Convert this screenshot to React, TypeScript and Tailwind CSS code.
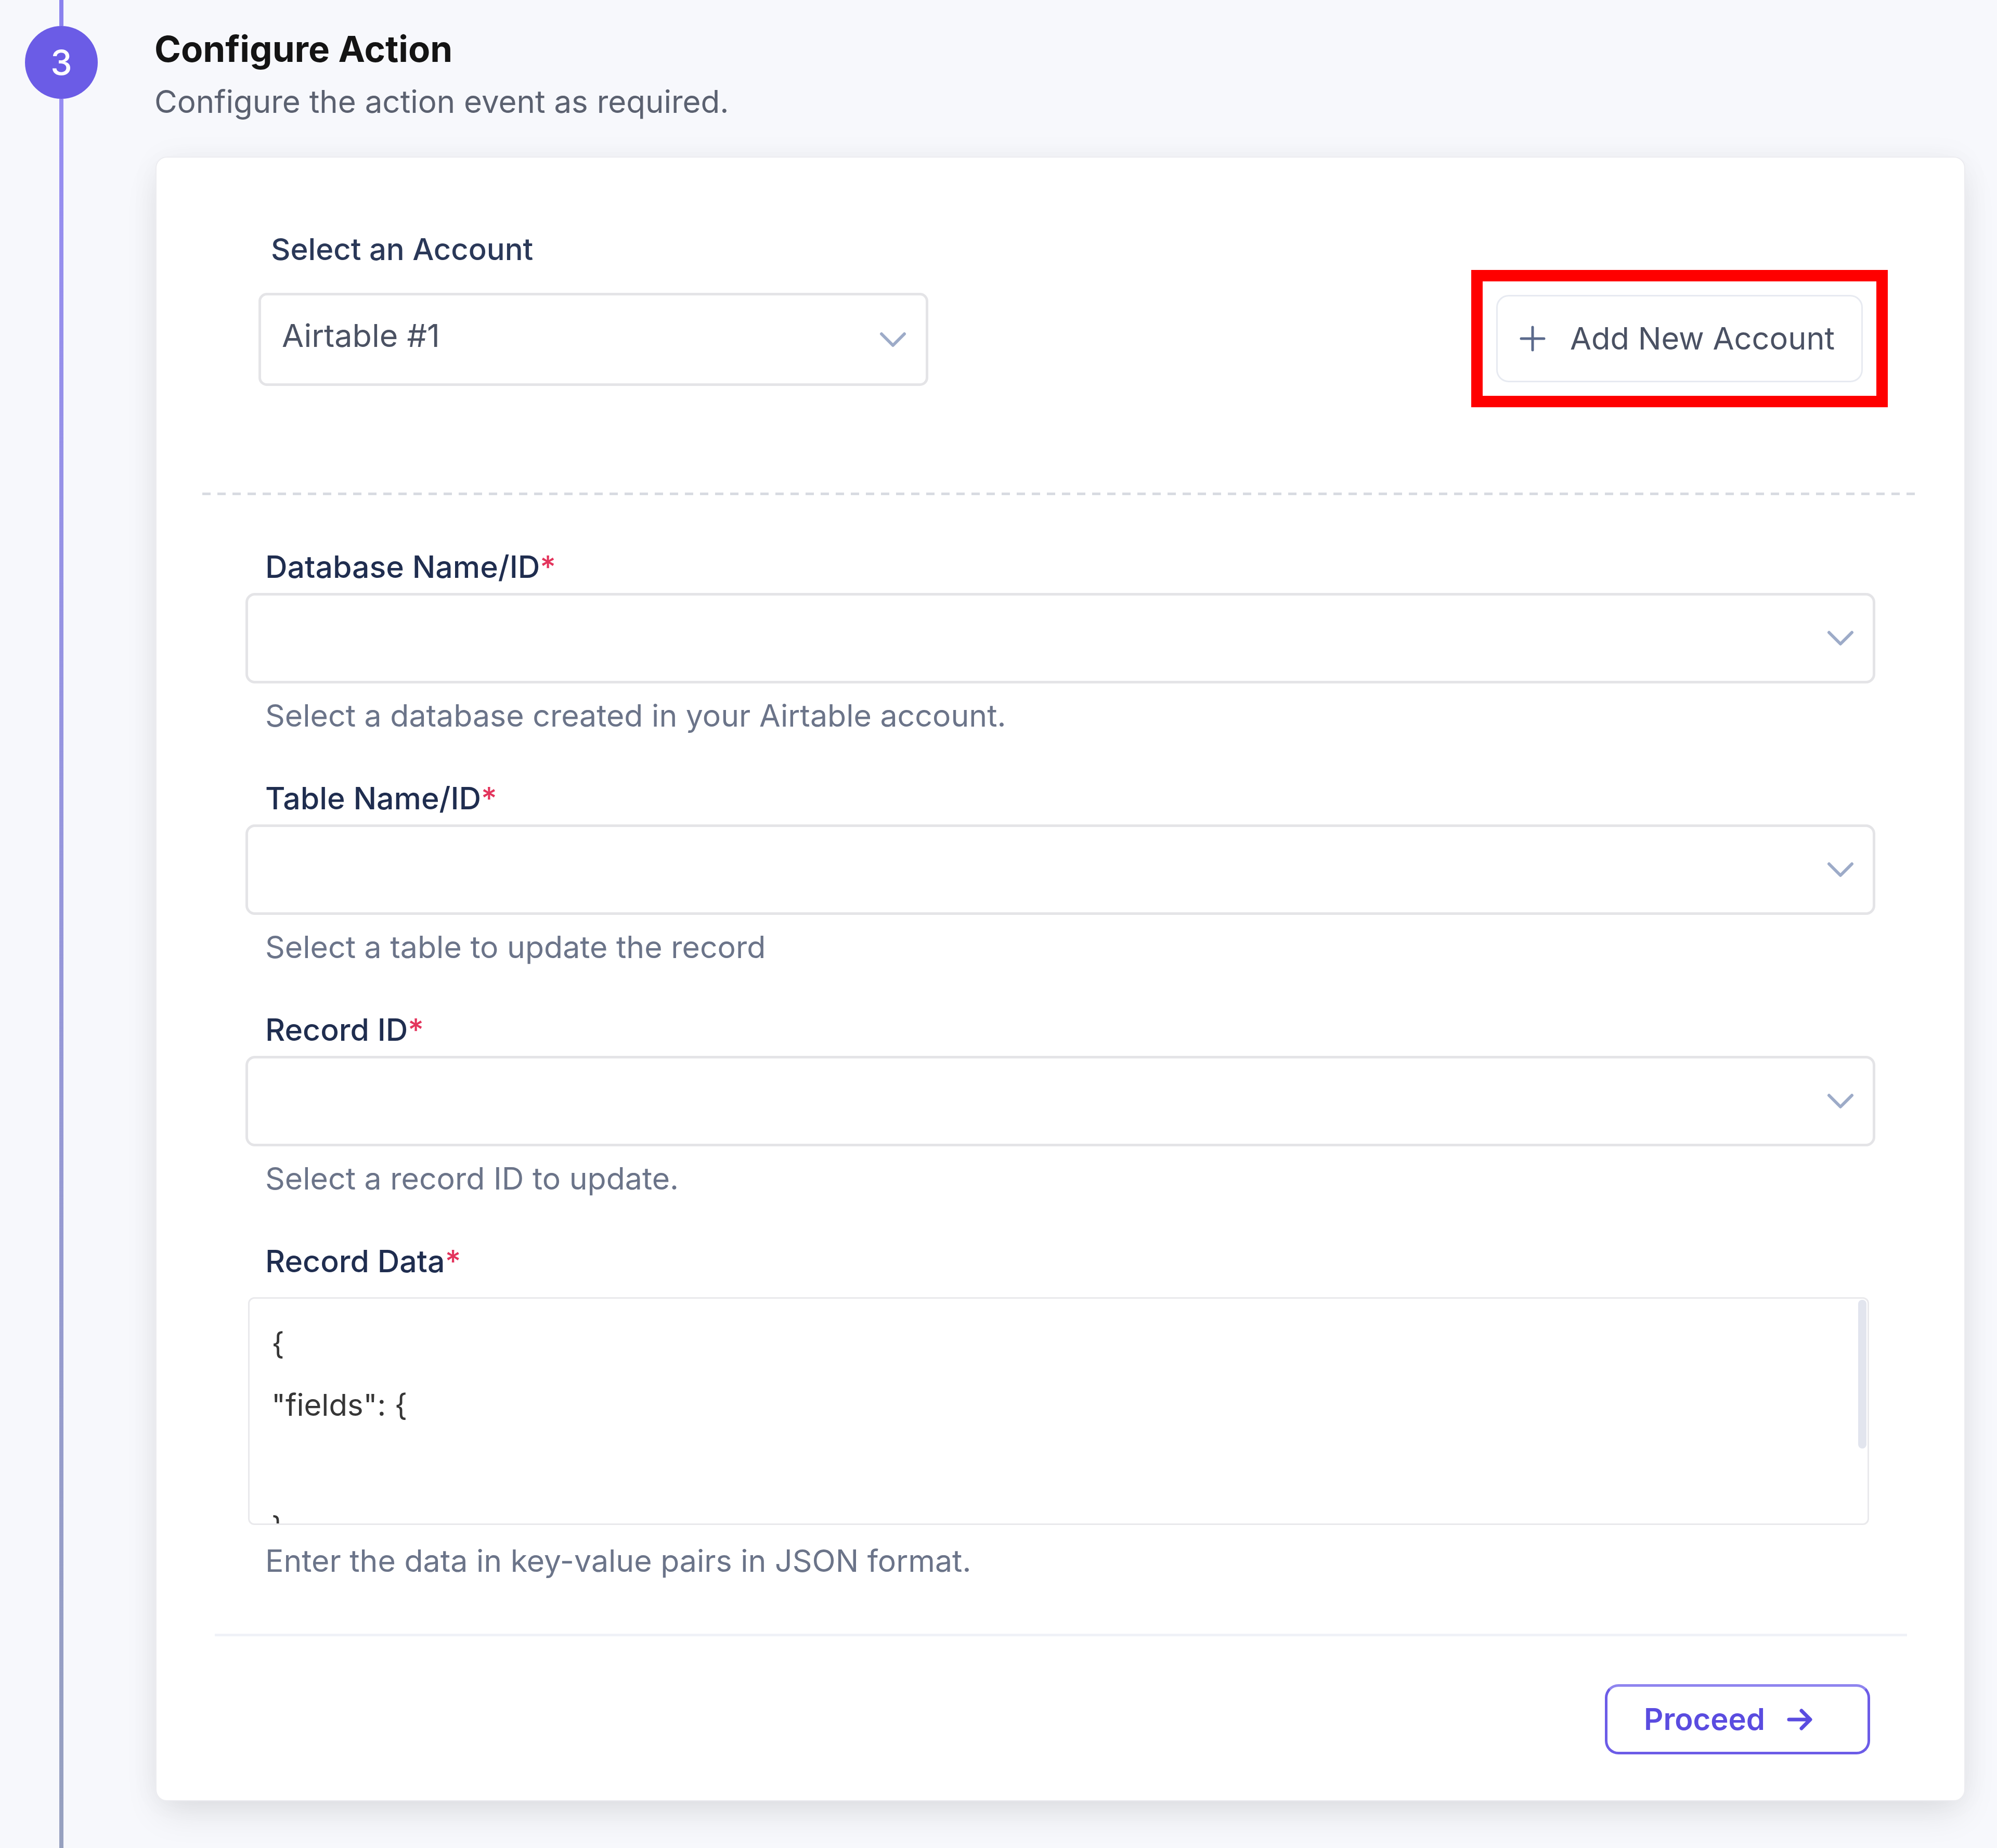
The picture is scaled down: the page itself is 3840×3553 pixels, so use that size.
import React from 'react';

interface FieldProps {
  label: string;
  help: string;
}

function Chevron() {
  return (
    <svg width="52" height="32" viewBox="0 0 52 32" fill="none" className="shrink-0">
      <path d="M4 5l22 22L48 5" stroke="#9dabc8" strokeWidth="6" strokeLinecap="round" strokeLinejoin="round" />
    </svg>
  );
}

function Label({ text }: { text: string }) {
  return (
    <p className="pl-[38px] text-[59px] leading-[70px] font-medium text-[#1f2d4f]">
      {text}
      <span className="text-[#e3345c]">*</span>
    </p>
  );
}

function SelectField({ label, help }: FieldProps) {
  return (
    <div className="flex flex-col">
      <Label text={label} />
      <div className="mt-[15px] h-[174px] rounded-[18px] border-[5px] border-[#e4e4e7] bg-white flex items-center justify-end pr-[36px]">
        <Chevron />
      </div>
      <p className="mt-[27px] pl-[38px] text-[59px] leading-[70px] text-[#6b7489]">{help}</p>
    </div>
  );
}

const FIELDS: FieldProps[] = [
  { label: 'Database Name/ID', help: 'Select a database created in your Airtable account.' },
  { label: 'Table Name/ID', help: 'Select a table to update the record' },
  { label: 'Record ID', help: 'Select a record ID to update.' },
];

const JSON_LINES = ['{', '"fields": {', '', '}'];

export default function App() {
  return (
    <div className="w-[3840px] h-[3553px] overflow-hidden bg-[#f7f8fc] flex font-['Inter',sans-serif]">
      {/* Step rail */}
      <div className="w-[236px] shrink-0 flex flex-col items-center">
        <div className="w-[8px] h-[50px] bg-[#8b82ee]" />
        <div className="w-[140px] h-[140px] shrink-0 rounded-full bg-[#6b5ce6] flex items-center justify-center text-white text-[66px] font-medium leading-none">
          3
        </div>
        <div className="w-[8px] flex-1 bg-gradient-to-b from-[#978df2] to-[#97a1bf]" />
      </div>

      <div className="ml-[63px] w-[3480px] flex flex-col">
        <h1 className="mt-[54px] -ml-[2px] text-[69px] leading-[80px] font-bold text-[#141414]">Configure Action</h1>
        <p className="mt-[26px] -ml-[2px] text-[60px] leading-[70px] text-[#5b6170]">
          Configure the action event as required.
        </p>

        {/* Card */}
        <div className="mt-[71px] rounded-[22px] border-2 border-[#ececf0] bg-white shadow-[0_30px_70px_-10px_rgba(0,0,0,0.10),0_0_60px_rgba(0,0,0,0.04)]">
          <div className="flex items-start justify-between pl-[196px] pr-[147px] pt-[141px]">
            <div className="flex flex-col">
              <p className="pl-[24px] text-[58px] leading-[70px] font-medium text-[#2a3858]">Select an Account</p>
              <div className="mt-[49px] w-[1288px] h-[179px] rounded-[16px] border-[5px] border-[#e4e4e7] flex items-center justify-between pl-[40px] pr-[37px]">
                <span className="pb-[14px] text-[61px] text-[#4b5263]">Airtable #1</span>
                <Chevron />
              </div>
            </div>

            <div className="mt-[75px] border-[22px] border-[#ff0000] p-[26px]">
              <div className="w-[705px] h-[168px] rounded-[24px] border-[3px] border-[#e7eaf1] flex items-center pl-[41px] gap-[46px]">
                <svg width="52" height="52" viewBox="0 0 52 52" fill="none" className="shrink-0">
                  <path d="M26 4v44M4 26h44" stroke="#5b6a8c" strokeWidth="5" strokeLinecap="round" />
                </svg>
                <span className="text-[59.5px] text-[#4a5163] whitespace-nowrap">Add New Account</span>
              </div>
            </div>
          </div>

          <div className="mx-[88px] mt-[164px] h-[5px] bg-[repeating-linear-gradient(90deg,#d8dbe1_0px,#d8dbe1_16px,transparent_16px,transparent_29px)]" />

          <div className="mt-[103px] px-[171px] flex flex-col gap-[89px]">
            {FIELDS.map((f) => (
              <SelectField key={f.label} label={f.label} help={f.help} />
            ))}

            <div className="flex flex-col">
              <Label text="Record Data" />
              <div className="relative mt-[34px] ml-[5px] mr-[12px] h-[438px] overflow-hidden rounded-[12px] border-[3px] border-[#e9e9ec] pl-[42px] pt-[27px]">
                {JSON_LINES.map((line, i) => (
                  <p key={i} className="h-[118px] text-[58px] leading-[118px] text-[#363636]">
                    {line}
                  </p>
                ))}
                <div className="absolute right-[2px] top-[2px] w-[16px] h-[286px] rounded-full bg-[#e2e5ee]" />
              </div>
              <p className="mt-[34px] pl-[38px] text-[59px] leading-[70px] text-[#6b7489]">
                Enter the data in key-value pairs in JSON format.
              </p>
            </div>
          </div>

          <div className="ml-[112px] mr-[110px] mt-[105px] h-[5px] bg-[#f0f2f7]" />

          <div className="flex justify-end pr-[181px] mt-[92px] pb-[88px]">
            <div className="w-[510px] h-[135px] rounded-[26px] border-[5px] border-[#6c5ce7] border-t-[#8f85ef] flex items-center pl-[70px] gap-[42px]">
              <span className="text-[58px] font-semibold text-[#5a4ce0]">Proceed</span>
              <svg width="52" height="52" viewBox="0 0 52 52" fill="none" className="shrink-0">
                <path d="M4 26h40M28 9l17 17-17 17" stroke="#5a4ce0" strokeWidth="7" strokeLinecap="round" strokeLinejoin="round" />
              </svg>
            </div>
          </div>
        </div>
      </div>
    </div>
  );
}
